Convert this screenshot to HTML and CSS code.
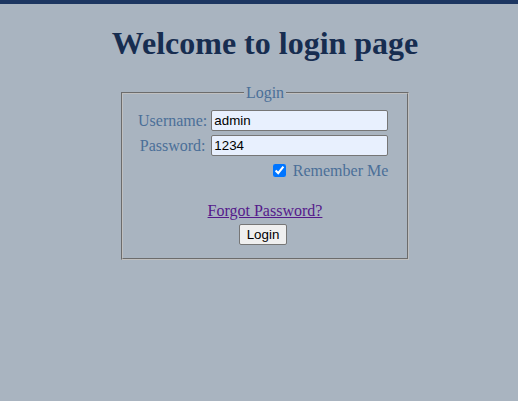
FILE: index.html
```html
<!DOCTYPE html>
<html>
<head>
<meta charset="utf-8">
<title>Login</title>
<link rel="stylesheet" href="styles.css">
</head>
<body>
<div class="topbar"></div>
<main class="page">
  <h1 class="title">Welcome to login page</h1>
  <form class="login-form">
    <fieldset class="box">
      <legend class="box-legend">Login</legend>
      <table class="fields">
        <tr>
          <td class="label">Username:</td>
          <td><input class="field" type="text" value="admin"></td>
        </tr>
        <tr>
          <td class="label">Password:</td>
          <td><input class="field" type="text" value="1234"></td>
        </tr>
        <tr>
          <td></td>
          <td class="remember"><input class="check" type="checkbox" checked> Remember Me</td>
        </tr>
      </table>
      <div class="actions">
        <a class="forgot" href="#">Forgot Password?</a>
        <button class="btn" type="button">Login</button>
      </div>
    </fieldset>
  </form>
</main>
</body>
</html>
```
FILE: styles.css
```css
html, body {
  margin: 0;
  padding: 0;
  background: #a9b4c0;
  font-family: "Liberation Serif", "Times New Roman", serif;
  font-size: 16px;
}
.topbar {
  height: 4px;
  background: #1d3661;
}
.page {
  padding: 0 8px 0 20px;
}
.title {
  margin: 21px 0 22px;
  text-align: center;
  font-size: 32px;
  font-weight: bold;
  color: #172d50;
  line-height: 37px;
}
.login-form {
  display: flex;
  justify-content: center;
}
.box {
  margin: 0;
  width: 260px;
  padding: 5px 12px 13px;
  border: 2px groove #c0c0c0;
  color: #4b6f98;
}
.box-legend {
  margin: 0 auto;
  padding: 0 2px;
  color: #4b6f98;
}
.fields {
  border-spacing: 2px;
}
.fields td {
  padding: 1px;
}
.label {
  text-align: center;
  color: #4b6f98;
}
.field {
  box-sizing: border-box;
  width: 177px;
  height: 21px;
  margin: 0;
  padding: 1px 2px;
  border: 1px solid #767676;
  border-radius: 2px;
  background: #e8f0fe;
  font-family: "Liberation Sans", Arial, sans-serif;
  font-size: 13.333px;
  color: #000;
}
.remember {
  text-align: right;
  color: #4b6f98;
  padding-top: 2px !important;
}
.check {
  margin: 3px 3px 3px 4px;
  width: 13px;
  height: 13px;
  accent-color: #0075ff;
  vertical-align: -1px;
}
.actions {
  display: flex;
  flex-direction: column;
  align-items: center;
  margin-top: 19px;
}
.forgot {
  color: #551a8b;
  line-height: 18px;
}
.btn {
  margin: 4px 4px 0 0;
  height: 21px;
  padding: 1px 7px;
  font-family: "Liberation Sans", Arial, sans-serif;
  font-size: 13.333px;
  color: #000;
  background: #efefef;
  border: 1px solid #767676;
  border-radius: 2px;
}
```
